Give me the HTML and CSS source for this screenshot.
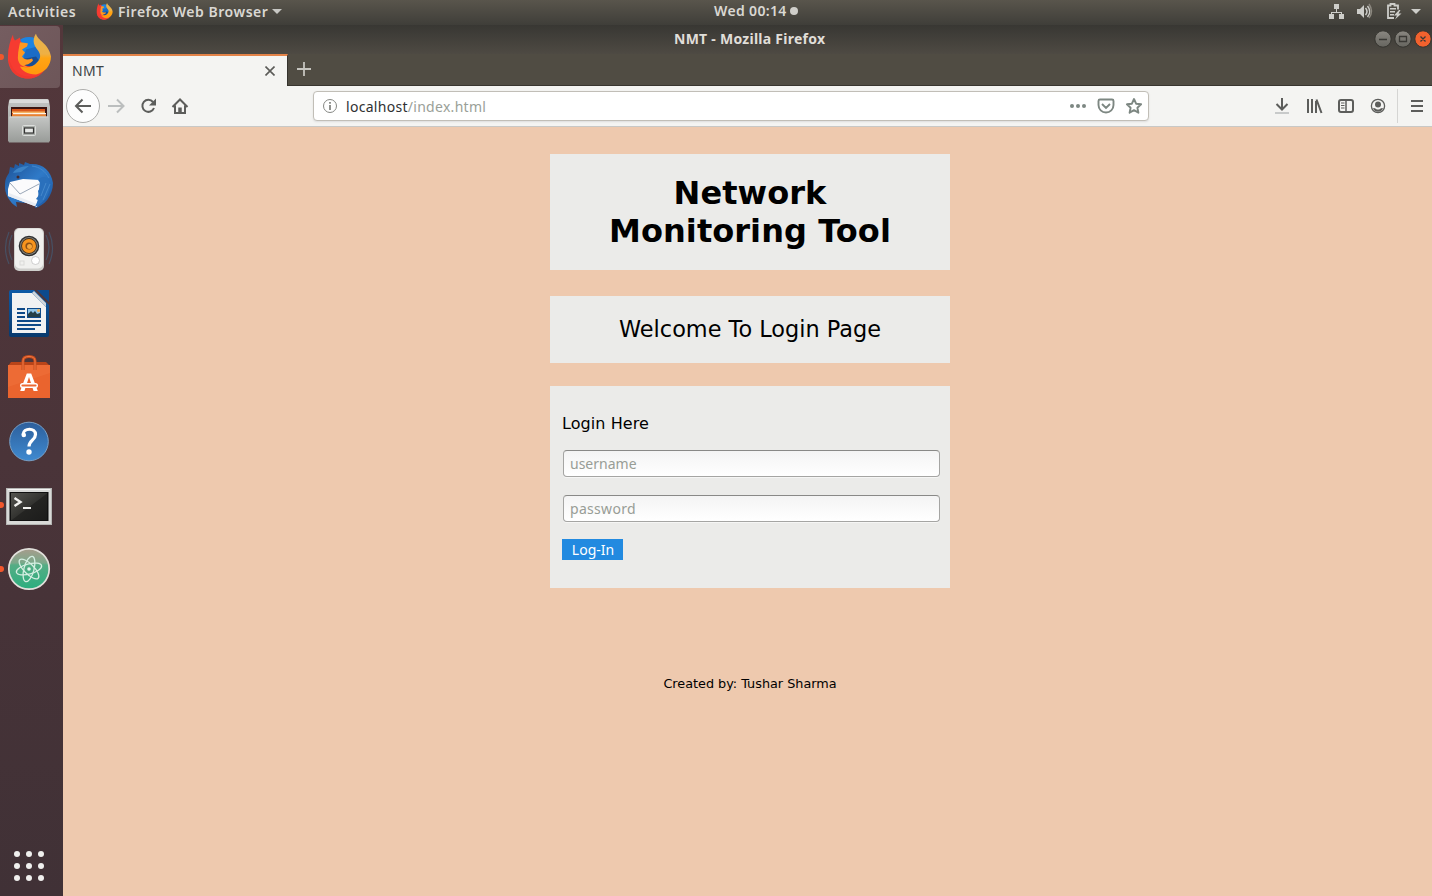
FILE: index.html
```html
<!DOCTYPE html>
<html lang="en">
<head>
<meta charset="utf-8">
<title>NMT</title>
<link rel="stylesheet" href="styles.css">
</head>
<body>
<svg class="defs" width="0" height="0">
  <defs>
    <linearGradient id="tail" x1="0" y1="0" x2="0" y2="1"><stop offset="0" stop-color="#e8b34b"/><stop offset=".5" stop-color="#eeb045"/><stop offset=".6" stop-color="#ffa514"/><stop offset="1" stop-color="#ff980c"/></linearGradient>
    <linearGradient id="steel" x1="0" y1="0" x2="0" y2="1"><stop offset="0" stop-color="#c4c6c4"/><stop offset="1" stop-color="#989b98"/></linearGradient>
    <linearGradient id="bird" x1="0" y1="0" x2="1" y2="1"><stop offset="0" stop-color="#1c4f93"/><stop offset=".5" stop-color="#2f7ac8"/><stop offset="1" stop-color="#1b549e"/></linearGradient>
    <linearGradient id="help" x1="0" y1="0" x2="0" y2="1"><stop offset="0" stop-color="#2d5f9c"/><stop offset="1" stop-color="#3f8ad0"/></linearGradient>
    <linearGradient id="term" x1="0" y1="0" x2="1" y2="1"><stop offset="0" stop-color="#555550"/><stop offset=".5" stop-color="#333330"/><stop offset=".52" stop-color="#242422"/><stop offset="1" stop-color="#1c1c1b"/></linearGradient>
    <linearGradient id="atom" x1="0" y1="0" x2="0" y2="1"><stop offset="0" stop-color="#a79c8c"/><stop offset=".35" stop-color="#7ba98b"/><stop offset=".4" stop-color="#55ad85"/><stop offset="1" stop-color="#2bae7e"/></linearGradient>
    <linearGradient id="writer" x1="0" y1="0" x2="0" y2="1"><stop offset="0" stop-color="#0d5aa6"/><stop offset="1" stop-color="#083a6d"/></linearGradient>
    <linearGradient id="knob" x1="0" y1="0" x2="0" y2="1"><stop offset="0" stop-color="#8a8781"/><stop offset="1" stop-color="#66655f"/></linearGradient>
    <symbol id="firefox" viewBox="0 0 44 46">
      <circle cx="22" cy="20" r="16.500" fill="#1c84e2"/>
      <path d="M19 16l15-4 2 14-6 8-16-2z" fill="#1b6cc6"/><path d="M13 26l16-3 3 4-8 7-11-1z" fill="#184d92"/>
      <path d="M6 1c0 3 1 5 2 6l5-3c0 3 1 5 3 6-3 4-4 8-4 13 1 7 6 10 13 10 9 0 13-3 17-8-2 12-10 20-21 20C8 45 0 35 1 22 1 15 3 7 6 1z" fill="#f63b31"/>
      <path d="M13 9c3 0 5 0 8 1l-1 3-5 3 3 3-3 4c2 3 5 4 10 2l1 2c-3 4-7 4-9 5l5 2c-8 0-12-5-11-12 0-4 1-8 2-13z" fill="#ff9820"/>
      <path d="M2 25c3 12 10 18 21 18 9 0 14-5 17-10-4 7-10 12-18 12C9 45 2 37 2 25z" fill="#ef392f"/>
      <path d="M29 0c1 7 13 10 15 23 0 9-6 16-15 18-9 0-14-4-16-8 7 2 14 0 17-4 4-4 4-8 1-12-3-4-7-9-2-17z" fill="url(#tail)"/>
    </symbol>
  </defs>
</svg>

<header class="topbar">
  <div class="topbar-left">
    <span class="activities">Activities</span>
    <svg class="app-logo" width="17" height="17"><use href="#firefox"/></svg>
    <span class="app-name">Firefox Web Browser</span>
    <svg width="10" height="6"><path d="M0 0h10L5 5z" fill="#c8c8c4"/></svg>
  </div>
  <div class="clock"><span class="clock-text">Wed 00:14</span><i class="dot"></i></div>
  <svg class="tray" width="96" height="20" viewBox="1328 1 96 20" fill="#cdcdc9" stroke="none">
    <path d="M1334 4h5v5h-5zM1329 14h5v5h-5zM1339 14h5v5h-5zM1336 9h1v3h5v2h-1v-1h-9v1h-1v-2h5z"/>
    <path d="M1357 9h3l4-4v13l-4-4h-3z"/>
    <path d="M1365.500 8q3 3.500 0 7M1367.500 6q4.500 5.500 0 11" fill="none" stroke="#cdcdc9" stroke-width="1.500"/>
    <path d="M1369 4q5 7.500 0 14" fill="none" stroke="#8d8980" stroke-width="1.500"/>
    <path d="M1394 18h-6V5.500h2.500V4h4v1.500h3.500v4" fill="none" stroke="#cdcdc9" stroke-width="1.800"/>
    <path d="M1390 8h6v1.500h-6zM1390 11h5v1.500h-5zM1390 14h4v1.500h-4zM1399 10l-5 5.500h3l-2 4 6.500-6h-3l2-3.500z"/>
    <path d="M1411 9h10l-5 5z"/>
  </svg>
</header>

<div class="desktop">
  <nav class="dock">
    <a class="slot active running"><svg width="60" height="64"><use href="#firefox" x="7" y="8.500" width="44" height="46"/></svg></a>
    <a class="slot"><svg width="60" height="64" viewBox="0 0 60 64">
      <path d="M9 12q0-2 2-2h36q2 0 2 2l1 6v34H8V18z" fill="url(#steel)"/><path d="M10 10.500h38l1 3.500H9z" fill="#dadbda"/>
      <path d="M11 18h36v10H11z" fill="#3a1612"/><path d="M12 20h33v8H12z" fill="#d9581c"/><path d="M12 22.500h33v1.500H12z" fill="#f6b464"/><path d="M13 24h33v1.500H13z" fill="#fdf4e4"/><path d="M12 25.500h34V28H12z" fill="#e9822f"/>
      <path d="M9 27.500h40l1 24-1 2H9l-1-2z" fill="url(#steel)"/><path d="M10 28h38" stroke="#d6d8d6"/>
      <rect x="22.500" y="36.500" width="13" height="10" rx="1" fill="#aaaeaa" stroke="#dcdedc"/><rect x="24.500" y="39" width="9" height="5" fill="#e6e8e6" stroke="#333" stroke-width="1.200"/>
    </svg></a>
    <a class="slot"><svg width="60" height="64" viewBox="0 0 60 64">
      <path d="M19 10l5 2 1-3 5 2c12-1 21 6 23 19 0 13-9 23-18 25l1-4-20-2 1 5C10 50 4 41 5 31c0-5 2-8 4-11l1-6 4 1 1-4 4 2z" fill="url(#bird)"/>
      <path d="M13 20c2-4 8-7 16-7l-8 6z" fill="#3b82c6"/><circle cx="18" cy="24" r="1.500" fill="#432b2f"/>
      <path d="M10 29l13-3 17 1-3 27-29-11 0-7z" fill="#fbfbfc"/><path d="M10 30l10 11 19-10" stroke="#9aa7b8" fill="none"/><path d="M9 40l28 11v3L8 43z" fill="#e9edf3"/>
      <path d="M38 27l4 5-4 6 1 4-3 4 2 1-3 7c9-4 16-13 15-24-2-5-7-9-12-3z" fill="#2a70bc"/>
      <path d="M32 13c8 1 13 5 17 12M46 30l-5 13M50 31l-7 16" stroke="#4488cc" fill="none"/>
    </svg></a>
    <a class="slot"><svg width="60" height="64" viewBox="0 0 60 64">
      <path d="M12 18q-6 12 0 25M9 15q-7 16 0 32M46 18q6 12 0 25M49 15q7 16 0 32" stroke="#475063" fill="none" stroke-width="1.200"/>
      <rect x="14" y="11" width="30" height="43" rx="5" fill="#cfcfcc"/><rect x="15" y="11.500" width="28" height="40" rx="5" fill="#f0f0ee"/>
      <circle cx="29" cy="29" r="10.300" fill="#2d2f31"/><circle cx="29" cy="29" r="8.900" fill="#85847c"/><circle cx="29" cy="29" r="7.900" fill="#44301a"/><circle cx="29" cy="29" r="7" fill="#f7941d"/><circle cx="29" cy="29" r="3.600" fill="#8c5116"/><circle cx="29.500" cy="29.500" r="2.500" fill="#f5a63a"/>
      <circle cx="35.500" cy="43.500" r="4" fill="#fff" stroke="#bbb" stroke-width=".7"/><rect x="20" y="44" width="4" height="4" fill="none" stroke="#dadad8"/>
    </svg></a>
    <a class="slot"><svg width="60" height="64" viewBox="0 0 60 64">
      <path d="M37 9h12v12z" fill="#0d4a8d"/><path d="M9 11q0-2 2-2h23l15 15v30q0 2-2 2H11q-2 0-2-2z" fill="url(#writer)"/><path d="M12 12h20l14 14v26H12z" fill="#f1f2f2"/><path d="M32 12l14 14v-4L34 10z" fill="#cfd5da"/>
      <path d="M17 27h8v2h-8zM17 31h8v2h-8zM17 35h8v2h-8zM17 39h24v2H17zM17 43h24v2H17zM17 47h18v2H17z" fill="#0e4a88"/>
      <path d="M27 27h14v10H27z" fill="#0e4a88"/><path d="M28 28h12v8H28z" fill="#91c6e8"/><path d="M28 36v-3l3-3 2 2 2-2 2 3 3-1v4z" fill="#253f45"/><circle cx="38.500" cy="29.500" r="1.500" fill="#f3b152"/>
    </svg></a>
    <a class="slot"><svg width="60" height="64" viewBox="0 0 60 64">
      <path d="M11 17h35l4 4H8z" fill="#b94419"/><path d="M8 20h42v33H8z" fill="#ed6b35"/><path d="M8 42l42-14v25H8z" fill="#ea642e"/>
      <path d="M23 25v-9q0-4.500 6-4.500t6 4.500v9" stroke="#c94c1b" stroke-width="3" fill="none"/><path d="M23 25v-9q0-4.500 6-4.500t6 4.500v9" stroke="#f07a48" stroke-width="1" fill="none"/>
      <path d="M26.800 28.500h4.400l6.600 17.500h-4.200L29 32l-4.600 14h-4.200z" fill="#fff"/><rect x="20.700" y="38.700" width="16.600" height="3.600" rx="1.800" fill="#ed6b35" stroke="#fff" stroke-width="1.400"/>
    </svg></a>
    <a class="slot"><svg width="60" height="64" viewBox="0 0 60 64">
      <circle cx="29" cy="32.500" r="19.300" fill="url(#help)" stroke="#789fc5"/>
      <path d="M23 25.500c.5-7 12.500-7 12.500 0 0 5.500-6.500 6-6.500 12" fill="none" stroke="#fff" stroke-width="3.200"/><circle cx="23.800" cy="26" r="2.300" fill="#fff"/><circle cx="29" cy="43" r="2.700" fill="#fff"/>
    </svg></a>
    <a class="slot running"><svg width="60" height="64" viewBox="0 0 60 64">
      <rect x="6.500" y="15.500" width="45" height="36" fill="#d8d9d7" stroke="#b5b6b4"/><path d="M8 16.500h42" stroke="#f5f5f4"/><rect x="9.500" y="19" width="39" height="29" fill="#111"/><rect x="11" y="20" width="36" height="27" fill="url(#term)"/>
      <path d="M14.500 25l6 4-6 4" stroke="#f1f1ef" fill="none" stroke-width="2.400"/><path d="M23 34h8v2h-8z" fill="#f1f1ef"/>
    </svg></a>
    <a class="slot running"><svg width="60" height="64" viewBox="0 0 60 64">
      <circle cx="29" cy="32" r="20.200" fill="url(#atom)" stroke="#e1e0db" stroke-width="1.700"/>
      <g fill="none" stroke="#d4eee1" stroke-width="1.300"><ellipse cx="29" cy="32" rx="13" ry="5" transform="rotate(-15 29 32)"/><ellipse cx="29" cy="32" rx="13" ry="5" transform="rotate(45 29 32)"/><ellipse cx="29" cy="32" rx="13" ry="5" transform="rotate(105 29 32)"/></g><circle cx="29" cy="32" r="1.800" fill="#e3f6ec"/>
    </svg></a>
    <svg class="apps" width="60" height="60" viewBox="0 0 60 60" fill="#f0f0ee"><g id="r"><circle cx="17" cy="18" r="3"/><circle cx="29" cy="18" r="3"/><circle cx="41" cy="18" r="3"/></g><use href="#r" y="12"/><use href="#r" y="24"/></svg>
  </nav>

  <main class="window">
    <div class="titlebar">
      <span class="win-title">NMT - Mozilla Firefox</span>
      <svg class="win-buttons" width="60" height="20" viewBox="1373 29 60 20">
        <g stroke="#35342f"><circle cx="1383" cy="39" r="8.200" fill="url(#knob)"/><circle cx="1403" cy="39" r="8.200" fill="url(#knob)"/><circle cx="1423" cy="39" r="8.200" fill="#f2622e"/></g>
        <path d="M1379 39.500h8M1399.500 36.500h7v5h-7zM1420.500 36.500l5 5M1425.500 36.500l-5 5" fill="none" stroke="#3a3935" stroke-width="1.300"/>
      </svg>
    </div>
    <div class="tabs">
      <div class="tab"><span class="tab-title">NMT</span><svg width="10" height="10"><path d="M.5.5l9 9M9.500.5l-9 9" stroke="#5b5b58" stroke-width="1.600"/></svg></div>
      <svg class="new-tab" width="14" height="14"><path d="M7 0v14M0 7h14" stroke="#c5c4be" stroke-width="1.800"/></svg>
    </div>
    <div class="toolbar">
      <svg class="nav-icons" width="130" height="40" viewBox="63 86 130 40" fill="none" stroke="#5c5d5b" stroke-width="2">
        <circle cx="83" cy="106" r="16.500" fill="#fdfdfd" stroke="#adadab" stroke-width="1"/>
        <path d="M91 106H76M82.500 99.500L76 106l6.500 6.500"/>
        <path d="M108 106h15M117 99.500l6.500 6.500-6.500 6.500" stroke="#bbbebe"/>
        <path d="M153 102a6 6 0 1 0 1 6"/><path d="M156 98.500v7h-7z" fill="#5c5d5b" stroke="none"/>
        <path d="M172.500 107l7.500-7.500 7.500 7.500M175 105.500v7.500h10v-7.500"/><path d="M180 113v-5.500" stroke-width="3.500"/>
      </svg>
      <div class="urlbar">
        <svg width="16" height="16" fill="none" stroke="#858783"><circle cx="8" cy="8" r="6.500"/><path d="M8 7v5M8 4v1.800" stroke-width="1.800"/></svg>
        <span class="url"><b>localhost</b><span class="path">/index.html</span></span>
        <svg class="url-icons" width="74" height="18" viewBox="1069 97 74 18" fill="none" stroke="#7d8782" stroke-width="1.900">
          <g fill="#7d8782" stroke="none"><circle cx="1072" cy="106" r="2"/><circle cx="1078" cy="106" r="2"/><circle cx="1084" cy="106" r="2"/></g>
          <path d="M1100 99.500h12q1.500 0 1.500 1.500v4a7.500 7.500 0 0 1-15 0v-4q0-1.500 1.500-1.500zM1102 104l4 4 4-4"/>
          <path d="M1134 99l2.100 4.700 5 .6-3.700 3.400 1 5-4.400-2.500-4.400 2.500 1-5-3.700-3.400 5-.6z" stroke-linejoin="round"/>
        </svg>
      </div>
      <svg class="tools" width="158" height="40" viewBox="1274 86 158 40" fill="none" stroke="#5c5d5b" stroke-width="2">
        <path d="M1282 98v11M1276.500 104l5.500 5.500 5.500-5.500"/><path d="M1275 113h14" stroke="#c8caca"/>
        <path d="M1308 99v14M1312 99v14M1316 101v12M1316.500 99.500l5 13.500"/>
        <rect x="1339" y="100" width="14" height="12" rx="2"/><path d="M1346 100v12" stroke-width="1.500"/><path d="M1341 103h3.500M1341 105.500h3.500M1341 108h3.500" stroke-width="1"/>
        <circle cx="1378" cy="106" r="6.600" stroke-width="1.300"/><circle cx="1378" cy="104.500" r="3" fill="#5c5d5b" stroke="none"/><path d="M1373 108q2.500 0 3 1 2 1 4 0 .5-1 3-1-1 3.700-5 3.700t-5-3.700z" fill="#5c5d5b" stroke="none"/>
        <path d="M1397.500 89v34" stroke="#d5d5d3" stroke-width="1"/><path d="M1411 101h12M1411 106h12M1411 111h12"/>
      </svg>
    </div>

    <section class="page">
      <h1 class="card heading">Network Monitoring Tool</h1>
      <div class="card welcome">Welcome To Login Page</div>
      <form class="card login">
        <label class="login-title">Login Here</label>
        <input class="field" type="text" placeholder="username">
        <input class="field" type="password" placeholder="password">
        <button class="submit" type="button">Log-In</button>
      </form>
      <footer class="credit">Created by: Tushar Sharma</footer>
    </section>
  </main>
</div>
</body>
</html>
```
FILE: styles.css
```css
* { box-sizing: border-box; }
body {
  margin: 0; height: 896px; overflow: hidden;
  display: flex; flex-direction: column;
  font-family: "Noto Sans", "Open Sans", sans-serif; font-size: 14px;
}
svg { display: block; flex: none; }
.defs { position: absolute; }

.topbar {
  height: 25px; flex: none; display: grid; grid-template-columns: 1fr auto 1fr;
  align-items: start; padding: 0 8px;
  background: linear-gradient(#59554c, #3f3e39);
  color: #dad8d3; font-weight: 600; line-height: 22px;
}
.topbar-left { display: flex; align-items: center; height: 23px; }
.activities { width: 88px; letter-spacing: .58px; }
.app-logo { margin-right: 5px; }
.app-name { width: 154px; white-space: nowrap; letter-spacing: .53px; }
.clock { display: flex; align-items: center; gap: 4px; margin-left: 80px; }
.clock-text { width: 72px; white-space: nowrap; letter-spacing: .35px; }
.dot { width: 8px; height: 8px; border-radius: 50%; background: #d0cfca; }
.tray { justify-self: end; margin-top: 1px; }

.desktop { flex: 1; display: flex; min-height: 0; }
.dock {
  width: 63px; flex: none; display: flex; flex-direction: column;
  background: linear-gradient(#53373b, #4a3439 50%, #403136);
}
.slot { display: flex; position: relative; width: 60px; height: 64px; }
.active::before {
  content: ""; position: absolute; inset: 1px 0; border-radius: 0 4px 4px 0;
  background: linear-gradient(135deg, #755d60, #6d5659);
}
.slot svg { position: relative; }
.running::after {
  content: ""; position: absolute; left: -2px; top: 29px;
  width: 6px; height: 6px; border-radius: 50%; background: #f2572c;
}
.apps { margin-top: auto; margin-bottom: 0; }

.window { flex: 1; min-width: 0; display: flex; flex-direction: column; background: #504c43; }
.titlebar {
  height: 29px; flex: none; display: flex; justify-content: flex-end; align-items: flex-start;
  background: linear-gradient(#383733, #4e4a43);
}
.win-title {
  width: 152px; margin: 3px 547px 0 0; white-space: nowrap;
  font-weight: 700; line-height: 22px; letter-spacing: .26px; color: #e0ded9;
}
.win-buttons { margin: 4px -1px 0 0; }
.tabs { height: 32px; flex: none; display: flex; background: #504c43; border-bottom: 1px solid #38352f; }
.tab {
  width: 225px; height: 32px; display: flex; align-items: center; justify-content: space-between;
  padding: 0 12px 0 9px; background: #f4f4f2; color: #3d4447;
  border-top: 2px solid #e38348; border-right: 1px solid #35332e;
}
.tab-title { margin-top: -2px; letter-spacing: .3px; }
.tab svg { margin-top: -1px; }
.new-tab { margin: 8px 0 0 9px; }
.toolbar {
  height: 41px; flex: none; display: flex; align-items: center;
  background: #f4f4f2; border-bottom: 1px solid #c8c8c6;
}
.urlbar {
  width: 836px; height: 30px; margin: 0 125px 0 120px; display: flex; align-items: center;
  padding: 0 5px 0 8px; background: #fff; border: 1px solid #c1beb7; border-radius: 4px;
  box-shadow: 0 1px 2px #ddd;
}
.url { margin-left: 8px; color: #9a9f98; white-space: nowrap; letter-spacing: .29px; }
.url b { font-weight: 400; color: #2f3132; }
.url-icons { margin-left: auto; }

.page {
  flex: 1; display: flex; flex-direction: column; align-items: center;
  padding: 27px 0 0 5px; background: #eec9ae; color: #000;
  font-family: "DejaVu Sans", sans-serif;
}
.card { width: 400px; margin: 0; background: #ebebe9; }
.heading { height: 116px; padding: 20px 50px; font-size: 32px; line-height: 38px; letter-spacing: .06px; text-align: center; }
.welcome { height: 67px; margin-top: 26px; font-size: 22.4px; line-height: 66px; text-align: center; }
.login {
  height: 202px; margin-top: 23px; padding: 27px 10px 0 12px;
  display: flex; flex-direction: column; align-items: flex-start;
}
.login-title { font-size: 16px; line-height: 21px; letter-spacing: .08px; }
.field {
  width: 377px; height: 27px; margin: 16px 0 0 1px; padding: 0 6px;
  border: 1px solid #a5a5a3; border-top-color: #898987; border-radius: 4px;
  background: linear-gradient(#f4f4f4, #fff); box-shadow: 0 1px 0 #f6f6f5;
  font: 14px "Noto Sans", sans-serif;
}
.field + .field { margin-top: 18px; letter-spacing: .3px; }
.field::placeholder { color: #989d96; opacity: 1; }
.submit {
  width: 61px; height: 21px; margin-top: 17px; padding: 0 0 0 1px; border: 0;
  background: #228ae0; color: #fff; font: 14px/21px "Noto Sans", sans-serif;
}
.credit { margin-top: 88px; font-size: 12.8px; line-height: 16px; }
```
